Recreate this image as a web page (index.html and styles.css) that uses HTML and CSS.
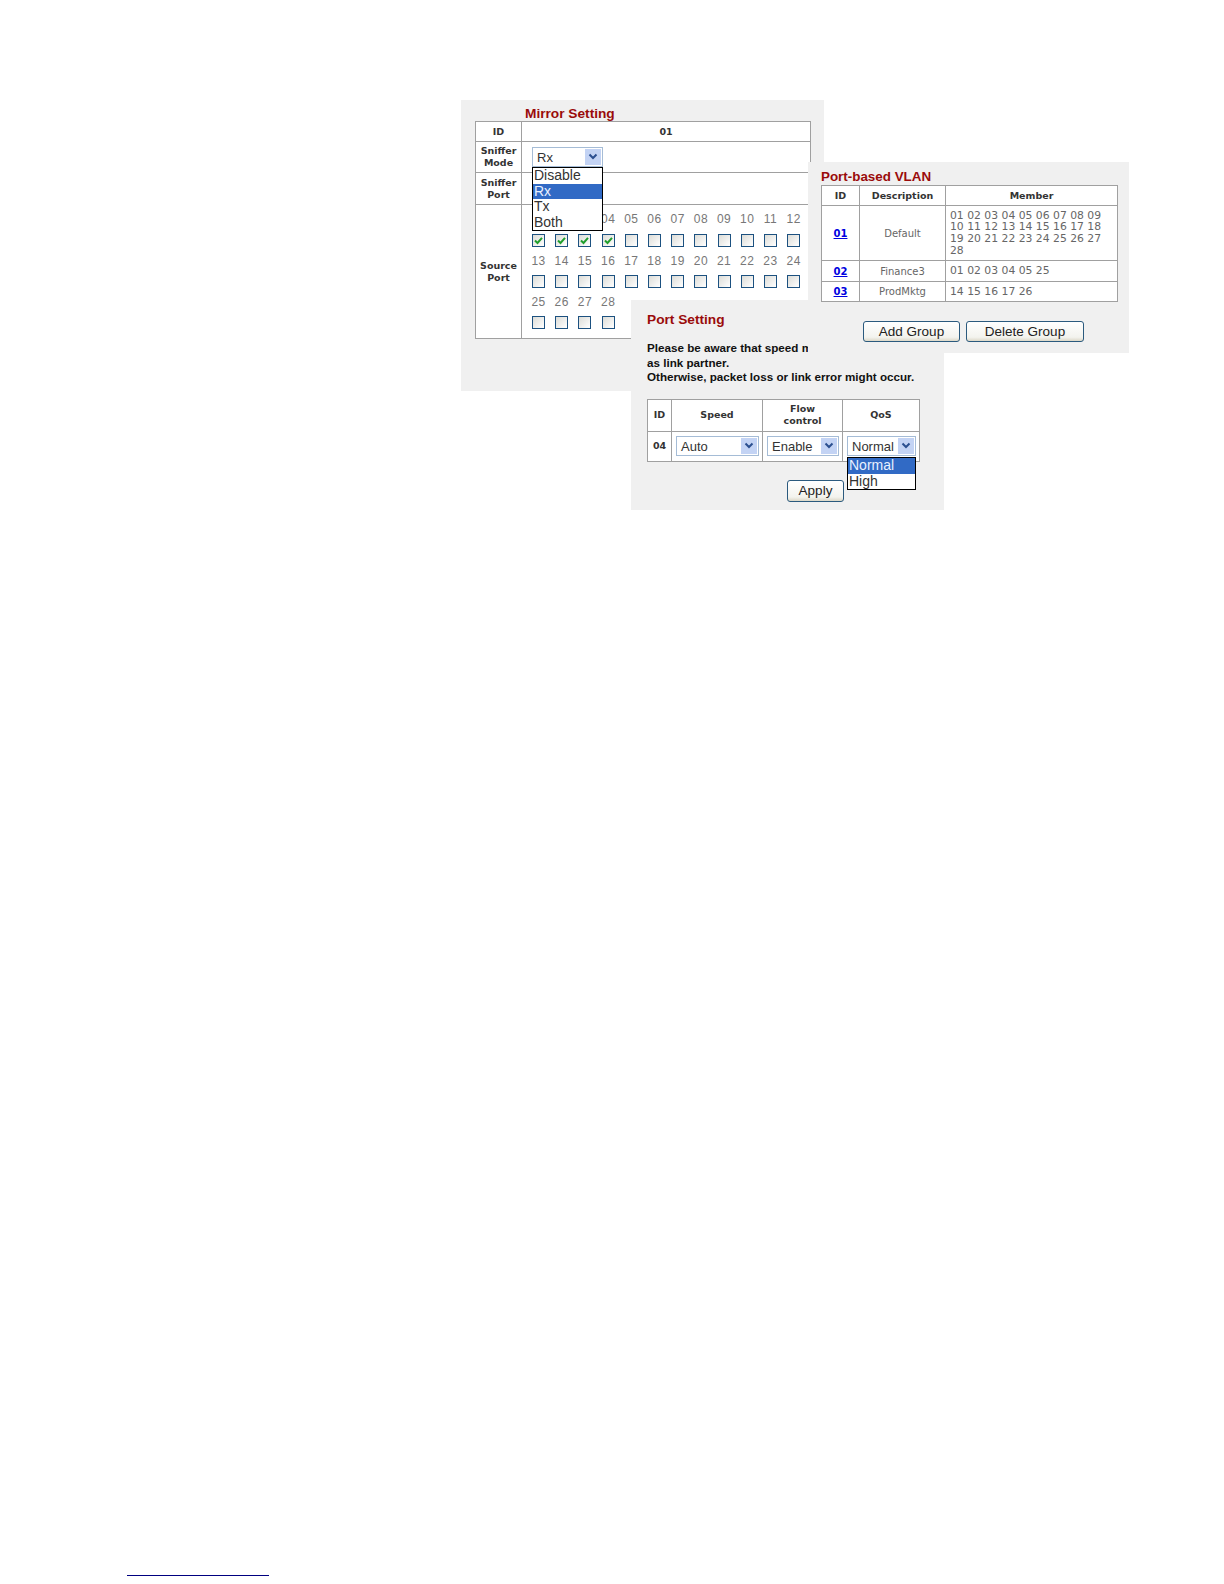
FILE: index.html
```html
<!DOCTYPE html>
<html lang="en">
<head>
  <meta charset="UTF-8"/>
  <title>Switch settings</title>
  <link rel="stylesheet" href="styles.css">
</head>
<body>
  <div class="canvas">

    <!-- mirror -->
    <div class="panel panel-mirror">
      <div class="title title-mirror">Mirror Setting</div>
      <table class="grid-table mirror-table">
        <colgroup><col class="c-46"><col class="c-289"></colgroup>
        <tr class="h-20"><th>ID</th><th>01</th></tr>
        <tr class="h-31">
          <th class="side">Sniffer<br>Mode</th>
          <td class="cell-select">
            <div class="select-wrap">
              <div class="select w-71"><span class="select-text">Rx</span>
                <span class="select-arrow"><svg width="10" height="8" viewBox="0 0 10 8"><path d="M1.5 1.5 5 5l3.5-3.5" fill="none" stroke="#2b4f8f" stroke-width="2"/></svg></span>
              </div>
              <ul class="options">
                <li>Disable</li>
                <li class="selected">Rx</li>
                <li>Tx</li>
                <li>Both</li>
              </ul>
            </div>
          </td>
        </tr>
        <tr class="h-32"><th class="side">Sniffer<br>Port</th><td></td></tr>
        <tr class="h-134">
          <th class="side">Source<br>Port</th>
          <td class="cell-ports">
            <div class="ports">
              <span></span><span></span><span></span><span>04</span><span>05</span><span>06</span><span>07</span><span>08</span><span>09</span><span>10</span><span>11</span><span>12</span>
              <i class="box"><svg width="11" height="11" viewBox="0 0 11 11"><path d="M2 5.5 4.5 8 9 2.8" fill="none" stroke="#1f9e2c" stroke-width="2"/></svg></i>
              <i class="box"><svg width="11" height="11" viewBox="0 0 11 11"><path d="M2 5.5 4.5 8 9 2.8" fill="none" stroke="#1f9e2c" stroke-width="2"/></svg></i>
              <i class="box"><svg width="11" height="11" viewBox="0 0 11 11"><path d="M2 5.5 4.5 8 9 2.8" fill="none" stroke="#1f9e2c" stroke-width="2"/></svg></i>
              <i class="box"><svg width="11" height="11" viewBox="0 0 11 11"><path d="M2 5.5 4.5 8 9 2.8" fill="none" stroke="#1f9e2c" stroke-width="2"/></svg></i>
              <i class="box"></i><i class="box"></i><i class="box"></i><i class="box"></i><i class="box"></i><i class="box"></i><i class="box"></i><i class="box"></i>
            </div>
            <div class="ports">
              <span>13</span><span>14</span><span>15</span><span>16</span><span>17</span><span>18</span><span>19</span><span>20</span><span>21</span><span>22</span><span>23</span><span>24</span>
              <i class="box"></i><i class="box"></i><i class="box"></i><i class="box"></i><i class="box"></i><i class="box"></i><i class="box"></i><i class="box"></i><i class="box"></i><i class="box"></i><i class="box"></i><i class="box"></i>
            </div>
            <div class="ports">
              <span>25</span><span>26</span><span>27</span><span>28</span>
              <span></span><span></span><span></span><span></span><span></span><span></span><span></span><span></span>
              <i class="box"></i><i class="box"></i><i class="box"></i><i class="box"></i>
            </div>
          </td>
        </tr>
      </table>
    </div>

    <!-- port -->
    <div class="panel panel-port">
      <div class="title">Port Setting</div>
      <p class="notice">Please be aware that speed must be the same<br>as link partner.<br>Otherwise, packet loss or link error might occur.</p>
      <table class="grid-table port-table">
        <colgroup><col class="c-24"><col class="c-91"><col class="c-80"><col class="c-77"></colgroup>
        <tr class="h-32"><th>ID</th><th>Speed</th><th>Flow<br>control</th><th>QoS</th></tr>
        <tr class="h-30">
          <th>04</th>
          <td class="cell-inline">
            <div class="select w-83"><span class="select-text">Auto</span>
              <span class="select-arrow"><svg width="10" height="8" viewBox="0 0 10 8"><path d="M1.5 1.5 5 5l3.500-3.500" fill="none" stroke="#2b4f8f" stroke-width="2"/></svg></span>
            </div>
          </td>
          <td class="cell-inline">
            <div class="select w-72"><span class="select-text">Enable</span>
              <span class="select-arrow"><svg width="10" height="8" viewBox="0 0 10 8"><path d="M1.5 1.5 5 5l3.5-3.5" fill="none" stroke="#2b4f8f" stroke-width="2"/></svg></span>
            </div>
          </td>
          <td class="cell-inline">
            <div class="select-wrap">
              <div class="select w-69"><span class="select-text">Normal</span>
                <span class="select-arrow"><svg width="10" height="8" viewBox="0 0 10 8"><path d="M1.5 1.5 5 5l3.5-3.5" fill="none" stroke="#2b4f8f" stroke-width="2"/></svg></span>
              </div>
              <ul class="options options-low">
                <li class="selected">Normal</li>
                <li>High</li>
              </ul>
            </div>
          </td>
        </tr>
      </table>
      <button class="btn btn-apply">Apply</button>
    </div>

    <!-- vlan -->
    <div class="panel panel-vlan">
      <div class="title">Port-based VLAN</div>
      <table class="grid-table vlan-table">
        <colgroup><col class="c-38"><col class="c-86"><col class="c-172"></colgroup>
        <tr class="h-20"><th>ID</th><th>Description</th><th>Member</th></tr>
        <tr class="h-55">
          <td class="center"><a href="#">01</a></td>
          <td class="center">Default</td>
          <td class="members">01 02 03 04 05 06 07 08 09 10 11 12 13 14 15 16 17 18 19 20 21 22 23 24 25 26 27 28</td>
        </tr>
        <tr class="h-21">
          <td class="center"><a href="#">02</a></td>
          <td class="center">Finance3</td>
          <td class="members">01 02 03 04 05 25</td>
        </tr>
        <tr class="h-20">
          <td class="center"><a href="#">03</a></td>
          <td class="center">ProdMktg</td>
          <td class="members">14 15 16 17 26</td>
        </tr>
      </table>
      <div class="actions">
        <button class="btn btn-add">Add Group</button>
        <button class="btn btn-delete">Delete Group</button>
      </div>
    </div>

    <div class="footnote-rule"></div>
  </div>
</body>
</html>
```

FILE: styles.css
```css
html, body {
  margin: 0; padding: 0;
  background: #fff;
}
.canvas {
  position: relative;
  width: 1224px; height: 1584px;
  overflow: hidden;
  font-family: "Liberation Sans", Arial, sans-serif;
}

/* the three screenshots lie loose on the page */
.panel {
  position: absolute;
  box-sizing: border-box;
  background: #f0f0f0;
}
.panel-mirror {
  left: 461px; top: 100px;
  width: 363px; height: 291px;
  padding: 6px 0 0 14px;
}
.panel-port {
  left: 631px; top: 300px;
  width: 313px; height: 210px;
  padding: 12px 0 0 16px;
}
.panel-vlan {
  left: 808px; top: 162px;
  width: 321px; height: 191px;
  padding: 6px 0 0 13px;
}

.title {
  font-size: 13.7px; font-weight: bold;
  line-height: 16px; height: 16px;
  color: #9a0b0b;
}
.title-mirror { margin-left: 50px; height: 15px; line-height: 15px; }
.panel-vlan .title { height: 17px; line-height: 17px; font-size: 13.4px; }

.notice {
  margin: 13px 0 14px;
  font-size: 11.65px; font-weight: bold;
  line-height: 14.5px;
  color: #111;
  white-space: nowrap;
}

/* tables */
.grid-table {
  border-collapse: collapse;
  table-layout: fixed;
  background: #fff;
  font-family: "DejaVu Sans", sans-serif;
}
.grid-table th, .grid-table td {
  border: 1px solid #a0a0a0;
  padding: 0;
}
.grid-table th {
  font-size: 9.5px; font-weight: bold;
  line-height: 12px;
  color: #333;
  text-align: center;
}
.mirror-table { width: 335px; }
.port-table   { width: 272px; }
.vlan-table   { width: 296px; }

.c-24  { width: 24px; }
.c-38  { width: 38px; }
.c-46  { width: 46px; }
.c-77  { width: 77px; }
.c-80  { width: 80px; }
.c-86  { width: 86px; }
.c-91  { width: 91px; }
.c-172 { width: 172px; }
.c-289 { width: 289px; }

.h-20  { height: 20px; }
.h-21  { height: 21px; }
.h-30  { height: 30px; }
.h-31  { height: 31px; }
.h-32  { height: 32px; }
.h-55  { height: 55px; }
.h-134 { height: 134px; }

.center {
  text-align: center;
  font-size: 10px;
  color: #666;
}
.center a {
  font-size: 10px; font-weight: bold;
  color: #0000e0;
}
.grid-table td.members {
  padding: 0 4px;
  font-size: 10.8px;
  line-height: 11.6px;
  color: #666;
}

/* fake dropdowns */
.grid-table td.cell-select { padding-left: 10px; vertical-align: middle; }
.grid-table td.cell-inline { padding-left: 4px; vertical-align: middle; }
.select-wrap { position: relative; width: max-content; }
.select {
  box-sizing: border-box;
  display: flex; align-items: center;
  height: 20px;
  padding: 1px;
  border: 1px solid #a5bcd6;
  background: #fff;
  font-family: "Liberation Sans", Arial, sans-serif;
  font-size: 13px;
  color: #333;
}
.select-text { flex: 1; padding-left: 3px; }
.select-arrow {
  display: flex; align-items: center; justify-content: center;
  width: 16px; height: 100%;
  background: #c3d3f4;
}
.w-69 { width: 69px; }
.w-71 { width: 71px; }
.w-72 { width: 72px; }
.w-83 { width: 83px; }

.options {
  position: absolute;
  top: 100%; left: 0; right: 0;
  z-index: 2;
  box-sizing: border-box;
  margin: 0; padding: 0;
  list-style: none;
  background: #fff;
  border: 1px solid #000;
  font-family: "Liberation Sans", Arial, sans-serif;
  font-size: 14px;
  line-height: 15.5px;
  color: #333;
}
.options li { padding-left: 1px; }
.options .selected { background: #316ac5; color: #e8f0ff; }
.options-low { margin-top: 1px; }

/* port checkboxes */
.grid-table td.cell-ports { padding: 4px 0 0 5px; vertical-align: top; }
.ports {
  display: grid;
  grid-template-columns: repeat(12, 23.2px);
  grid-auto-rows: 20.7px;
  justify-items: center; align-items: center;
  font-family: "Liberation Sans", Arial, sans-serif;
  font-size: 12px;
  letter-spacing: 0.5px;
  color: #777;
}
.box {
  box-sizing: border-box;
  display: block;
  width: 13px; height: 13px;
  border: 1px solid #1c5180;
  background: linear-gradient(135deg, #dcdcd7, #fff);
}
.box svg { display: block; }

/* buttons */
.btn {
  box-sizing: border-box;
  margin: 0; padding: 0;
  height: 21px;
  border: 1px solid #2b5a7e;
  border-radius: 3px;
  background: linear-gradient(#fff, #f3f3ee 80%, #dcd8c8);
  font-family: "Liberation Sans", Arial, sans-serif;
  font-size: 13.5px;
  color: #222;
}
.actions {
  display: flex; gap: 6px;
  margin: 19px 0 0 42px;
}
.btn-add    { width: 97px; }
.btn-delete { width: 118px; }
.btn-apply  { display: block; width: 57px; height: 22px; margin: 18px 0 0 140px; }

.footnote-rule {
  margin-left: 127px;
  padding-top: 1575px;
  width: 142px;
  border-bottom: 1px solid #000080;
}
```
